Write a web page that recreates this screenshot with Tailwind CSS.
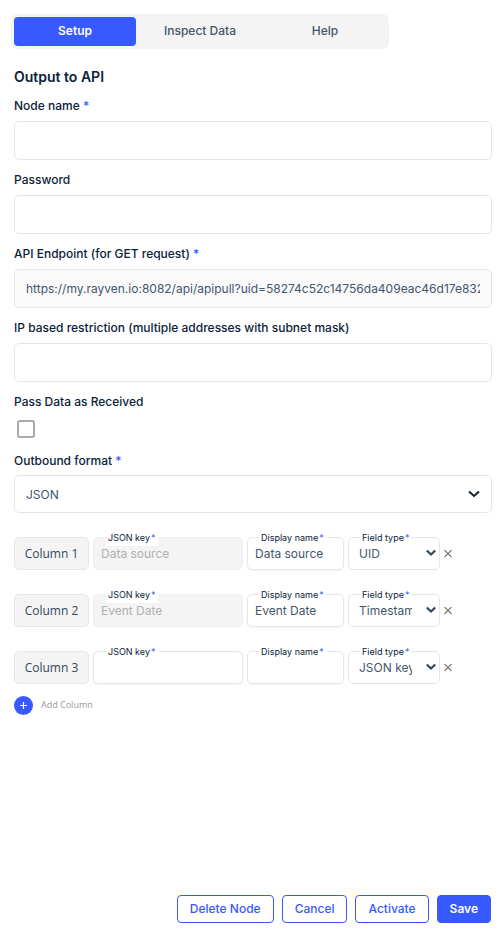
<!DOCTYPE html>
<html lang="en">
<head>
    <meta charset="UTF-8">
    <meta name="viewport" content="width=device-width, initial-scale=1.0">
    <title>Output to API</title>
    <script src="https://cdn.jsdelivr.net/npm/@tailwindcss/browser@4"></script>
</head>
<body class="bg-white font-['Inter',sans-serif] text-[12px] leading-5 text-[#0b2239]">
    <div class="flex min-h-screen flex-col pt-[14px] pr-3 pb-2 pl-[14px]">
        <!-- Tabs -->
        <nav class="-ml-[3px] grid w-[378px] max-w-full grid-cols-3 gap-[3px] rounded-md bg-[#f4f4f4] p-[3px] font-medium text-[#44566a]">
            <button type="button" class="h-[29px] rounded bg-[#3859ff] pb-px font-semibold text-white">Setup</button>
            <button type="button" class="h-[29px] rounded pb-px">Inspect Data</button>
            <button type="button" class="h-[29px] rounded pb-px">Help</button>
        </nav>

        <form class="flex flex-1 flex-col">
            <h1 class="mt-4 mb-[7px] text-[14px] leading-6 font-semibold">Output to API</h1>

            <div class="flex flex-col gap-[10px]">
                <div class="flex flex-col gap-[5px]">
                    <label for="node-name" class="font-medium">Node name <span class="text-[#3859ff]">*</span></label>
                    <input id="node-name" type="text" class="h-[39px] w-full rounded-[5px] border border-[#e6e6e6] px-[11px] text-[#44566a]">
                </div>
                <div class="flex flex-col gap-[5px]">
                    <label for="password" class="font-medium">Password</label>
                    <input id="password" type="password" class="h-[39px] w-full rounded-[5px] border border-[#e6e6e6] px-[11px] text-[#44566a]">
                </div>
                <div class="flex flex-col gap-[5px]">
                    <label for="endpoint" class="font-medium">API Endpoint (for GET request) <span class="text-[#3859ff]">*</span></label>
                    <input id="endpoint" type="text" readonly value="https://my.rayven.io:8082/api/apipull?uid=58274c52c14756da409eac46d17e8323" class="h-[39px] w-full rounded-[5px] border border-[#e6e6e6] bg-[#fafafa] px-[11px] pb-px text-[#44566a]">
                </div>
                <div class="flex flex-col gap-[5px]">
                    <label for="ip" class="font-medium">IP based restriction (multiple addresses with subnet mask)</label>
                    <input id="ip" type="text" class="h-[39px] w-full rounded-[5px] border border-[#e6e6e6] px-[11px] text-[#44566a]">
                </div>
                <div class="flex flex-col gap-2">
                    <label for="pass-data" class="font-medium">Pass Data as Received</label>
                    <input id="pass-data" type="checkbox" class="ml-[3px] size-[18px] appearance-none rounded-[3px] border-2 border-[#a7abb0] bg-white checked:bg-[#3859ff]">
                </div>
                <div class="mt-[3px] flex flex-col gap-1">
                    <label for="format" class="font-medium">Outbound format <span class="text-[#3859ff]">*</span></label>
                    <div class="relative">
                        <select id="format" class="h-[38px] w-full appearance-none rounded-[5px] border border-[#e6e6e6] px-[11px] pt-px text-[#44566a]">
                            <option>JSON</option>
                        </select>
                        <svg class="pointer-events-none absolute top-[13px] right-3 size-3" viewBox="0 0 12 12" fill="none" stroke="#14202c" stroke-width="2"><path d="M1 3.5l5 4.5 5-4.5"/></svg>
                    </div>
                </div>
            </div>

            <!-- Columns -->
            <div class="mt-6 flex flex-col gap-6">
                <div class="flex items-center gap-1">
                    <div class="flex h-[33px] w-[75px] items-center justify-center rounded-[5px] border border-[#e6e6e6] bg-[#f4f4f4] font-['Open_Sans',sans-serif] text-[#33475b]">Column 1</div>
                    <div class="relative w-[150px]">
                        <label for="key-1" class="absolute -top-[5px] left-[13px] flex gap-px bg-white px-[2px] pb-[2px] text-[9px] leading-3">JSON key <span class="text-[#3859ff]">*</span></label>
                        <input id="key-1" type="text" disabled placeholder="Data source" class="block h-[33px] w-full rounded-[5px] border border-[#f0f0f0] bg-[#f4f4f4] px-[7px] placeholder:text-[#b0b0b0]">
                    </div>
                    <div class="relative w-[97px]">
                        <label for="name-1" class="absolute -top-[5px] left-3 flex gap-px bg-white px-[2px] text-[9px] leading-3">Display name <span class="text-[#3859ff]">*</span></label>
                        <input id="name-1" type="text" value="Data source" class="block h-[33px] w-full rounded-[5px] border border-[#e6e6e6] px-[7px] text-[#44566a] shadow-xs">
                    </div>
                    <div class="relative w-[92px]">
                        <label for="type-1" class="absolute -top-[5px] left-3 flex gap-px bg-white px-[2px] text-[9px] leading-3">Field type <span class="text-[#3859ff]">*</span></label>
                        <select id="type-1" class="block h-[33px] w-full appearance-none rounded-[5px] border border-[#e6e6e6] pr-[27px] pl-[10px] text-[#44566a]">
                            <option>UID</option>
                        </select>
                        <svg class="pointer-events-none absolute top-[11px] right-1 size-[10px]" viewBox="0 0 10 10" fill="none" stroke="#33475b" stroke-width="2.2"><path d="M.8 2.5L5 6.5l4.2-4"/></svg>
                    </div>
                    <button type="button" aria-label="Remove column 1" class="size-2">
                        <svg class="size-2" viewBox="0 0 8 8" stroke="#777" stroke-width="1.1"><path d="M.5 0l7 7M7.5 0l-7 7"/></svg>
                    </button>
                </div>

                <div class="flex items-center gap-1">
                    <div class="flex h-[33px] w-[75px] items-center justify-center rounded-[5px] border border-[#e6e6e6] bg-[#f4f4f4] font-['Open_Sans',sans-serif] text-[#33475b]">Column 2</div>
                    <div class="relative w-[150px]">
                        <label for="key-2" class="absolute -top-[5px] left-[13px] flex gap-px bg-white px-[2px] pb-[2px] text-[9px] leading-3">JSON key <span class="text-[#3859ff]">*</span></label>
                        <input id="key-2" type="text" disabled placeholder="Event Date" class="block h-[33px] w-full rounded-[5px] border border-[#f0f0f0] bg-[#f4f4f4] px-[7px] placeholder:text-[#b0b0b0]">
                    </div>
                    <div class="relative w-[97px]">
                        <label for="name-2" class="absolute -top-[5px] left-3 flex gap-px bg-white px-[2px] text-[9px] leading-3">Display name <span class="text-[#3859ff]">*</span></label>
                        <input id="name-2" type="text" value="Event Date" class="block h-[33px] w-full rounded-[5px] border border-[#e6e6e6] px-[7px] text-[#44566a] shadow-xs">
                    </div>
                    <div class="relative w-[92px]">
                        <label for="type-2" class="absolute -top-[5px] left-3 flex gap-px bg-white px-[2px] text-[9px] leading-3">Field type <span class="text-[#3859ff]">*</span></label>
                        <select id="type-2" class="block h-[33px] w-full appearance-none rounded-[5px] border border-[#e6e6e6] pr-[27px] pl-[10px] text-[#44566a]">
                            <option>Timestamp</option>
                        </select>
                        <svg class="pointer-events-none absolute top-[11px] right-1 size-[10px]" viewBox="0 0 10 10" fill="none" stroke="#33475b" stroke-width="2.2"><path d="M.8 2.5L5 6.5l4.2-4"/></svg>
                    </div>
                    <button type="button" aria-label="Remove column 2" class="size-2">
                        <svg class="size-2" viewBox="0 0 8 8" stroke="#777" stroke-width="1.1"><path d="M.5 0l7 7M7.5 0l-7 7"/></svg>
                    </button>
                </div>

                <div class="flex items-center gap-1">
                    <div class="flex h-[33px] w-[75px] items-center justify-center rounded-[5px] border border-[#e6e6e6] bg-[#f4f4f4] font-['Open_Sans',sans-serif] text-[#33475b]">Column 3</div>
                    <div class="relative w-[150px]">
                        <label for="key-3" class="absolute -top-[5px] left-[13px] flex gap-px bg-white px-[2px] text-[9px] leading-3">JSON key <span class="text-[#3859ff]">*</span></label>
                        <input id="key-3" type="text" class="block h-[33px] w-full rounded-[5px] border border-[#e6e6e6] px-[7px] text-[#44566a] shadow-xs">
                    </div>
                    <div class="relative w-[97px]">
                        <label for="name-3" class="absolute -top-[5px] left-3 flex gap-px bg-white px-[2px] text-[9px] leading-3">Display name <span class="text-[#3859ff]">*</span></label>
                        <input id="name-3" type="text" class="block h-[33px] w-full rounded-[5px] border border-[#e6e6e6] px-[7px] text-[#44566a] shadow-xs">
                    </div>
                    <div class="relative w-[92px]">
                        <label for="type-3" class="absolute -top-[5px] left-3 flex gap-px bg-white px-[2px] text-[9px] leading-3">Field type <span class="text-[#3859ff]">*</span></label>
                        <select id="type-3" class="block h-[33px] w-full appearance-none rounded-[5px] border border-[#e6e6e6] pr-[27px] pl-[10px] text-[#44566a]">
                            <option>JSON key</option>
                        </select>
                        <svg class="pointer-events-none absolute top-[11px] right-1 size-[10px]" viewBox="0 0 10 10" fill="none" stroke="#33475b" stroke-width="2.2"><path d="M.8 2.5L5 6.5l4.2-4"/></svg>
                    </div>
                    <button type="button" aria-label="Remove column 3" class="size-2">
                        <svg class="size-2" viewBox="0 0 8 8" stroke="#777" stroke-width="1.1"><path d="M.5 0l7 7M7.5 0l-7 7"/></svg>
                    </button>
                </div>
            </div>

            <button type="button" class="mt-[11px] flex items-center gap-2 self-start font-['Open_Sans',sans-serif] text-[9px] leading-5 text-[#999]">
                <svg class="size-[19px]" viewBox="0 0 19 19"><circle cx="9.5" cy="9.5" r="9.5" fill="#3859ff"/><path d="M9.5 6v7M6 9.5h7" stroke="#fff" stroke-width="1.2"/></svg>
                Add Column
            </button>

            <!-- Actions -->
            <div class="mt-auto flex justify-end gap-2 pr-px font-medium text-[#3859ff]">
                <button type="button" class="h-7 rounded border border-[#3859ff] px-3">Delete Node</button>
                <button type="button" class="h-7 rounded border border-[#3859ff] px-3">Cancel</button>
                <button type="button" class="h-7 rounded border border-[#3859ff] px-3">Activate</button>
                <button type="submit" class="h-7 rounded border border-[#3859ff] bg-[#3859ff] px-3 font-semibold text-white">Save</button>
            </div>
        </form>
    </div>
</body>
</html>
